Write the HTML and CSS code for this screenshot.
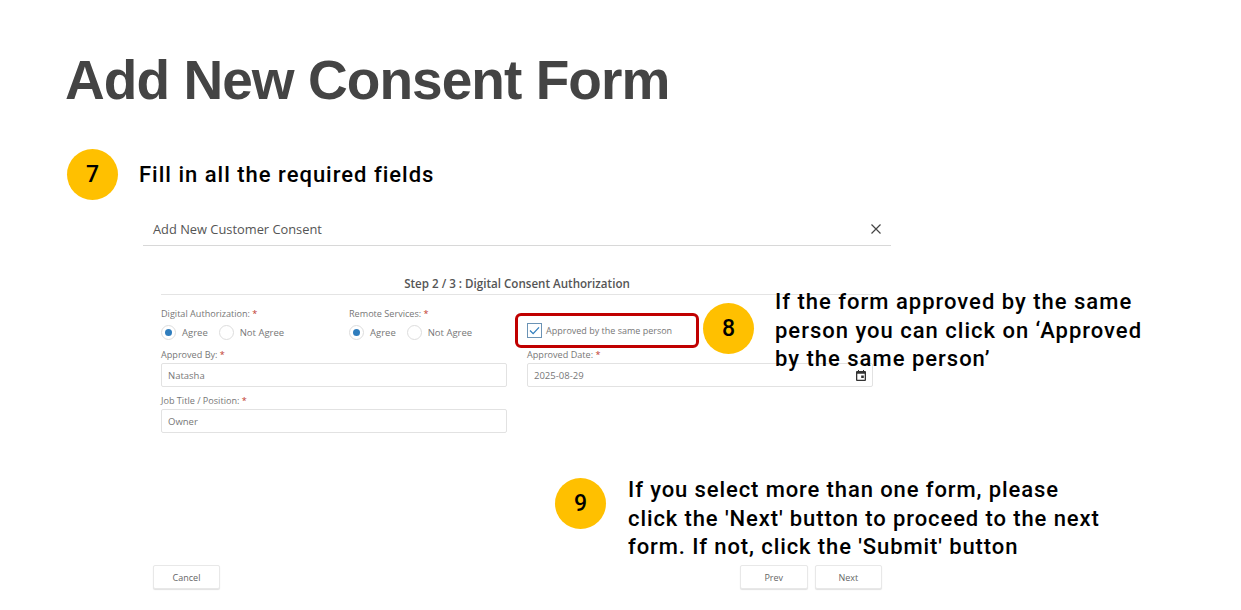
FILE: index.html
```html
<!DOCTYPE html>
<html>
<head>
    <title>Add New Consent Form</title>
    <link rel="stylesheet" href="styles.css">
</head>
<body>
    <div id="slide">
        <h1>Add New Consent Form</h1>

        <div class="step-row">
            <span class="badge">7</span>
            <span class="note">Fill in all the required fields</span>
        </div>

        <div id="panel">
            <div class="panel-header">
                <span>Add New Customer Consent</span>
                <svg class="close-icon" width="10" height="10" viewBox="0 0 10 10">
                    <path d="M0.5 0.5L9.5 9.5M9.5 0.5L0.5 9.5" stroke="#444" stroke-width="1.2" fill="none"/>
                </svg>
            </div>

            <div class="form-body">
                <div class="step-title">Step 2 / 3 : Digital Consent Authorization</div>

                <div class="form-grid">
                    <div class="radio-groups">
                        <div class="radio-group">
                            <label class="field-label">Digital Authorization: <em>*</em></label>
                            <div class="radio-row">
                                <span class="radio checked"></span><span class="radio-text">Agree</span>
                                <span class="radio"></span><span class="radio-text">Not Agree</span>
                            </div>
                        </div>
                        <div class="radio-group">
                            <label class="field-label">Remote Services: <em>*</em></label>
                            <div class="radio-row">
                                <span class="radio checked"></span><span class="radio-text">Agree</span>
                                <span class="radio"></span><span class="radio-text">Not Agree</span>
                            </div>
                        </div>
                    </div>
                    <div class="same-person">
                        <span class="checkbox">
                            <svg width="11" height="9" viewBox="0 0 12 10">
                                <path d="M1 5L4.5 8.5L11 1.5" stroke="#2f7dbd" stroke-width="1.4" fill="none"/>
                            </svg>
                        </span>
                        <span>Approved by the same person</span>
                    </div>

                    <div class="field">
                        <label class="field-label">Approved By: <em>*</em></label>
                        <div class="input">Natasha</div>
                    </div>
                    <div class="field">
                        <label class="field-label">Approved Date: <em>*</em></label>
                        <div class="input date-input">
                            <span>2025-08-29</span>
                            <svg width="10" height="11" viewBox="0 0 10 11">
                                <path d="M1 1H9A1 1 0 0 1 10 2V10A1 1 0 0 1 9 11H1A1 1 0 0 1 0 10V2A1 1 0 0 1 1 1ZM1.3 3.8V9.7H8.7V3.8ZM5.2 5.4H7.8V8H5.2Z" fill="#333" fill-rule="evenodd"/>
                                <path d="M2.5 0V1.5M7.5 0V1.5" stroke="#333" stroke-width="1"/>
                            </svg>
                        </div>
                    </div>

                    <div class="field">
                        <label class="field-label">Job Title / Position: <em>*</em></label>
                        <div class="input">Owner</div>
                    </div>
                </div>
            </div>

            <div class="panel-footer">
                <button class="btn">Cancel</button>
                <div class="footer-right">
                    <button class="btn">Prev</button>
                    <button class="btn">Next</button>
                </div>
            </div>
        </div>

        <!-- callouts that sit over the form -->
        <div class="highlight"></div>
        <span class="badge badge-8">8</span>
        <p class="note note-8">If the form approved by the same<br>person you can click on ‘Approved<br>by the same person’</p>
        <span class="badge badge-9">9</span>
        <p class="note note-9">If you select more than one form, please<br>click the 'Next' button to proceed to the next<br>form. If not, click the 'Submit' button</p>
    </div>
</body>
</html>
```

FILE: styles.css
```css
body {
    margin: 0;
    background-color: #fff;
    font-family: "Open Sans", "Noto Sans", sans-serif;
}

#slide {
    position: relative;
    width: 1241px;
    height: 610px;
    overflow: hidden;
}

h1 {
    margin: 0;
    padding: 49px 0 0 65px;
    font-family: "Liberation Sans", Arial, sans-serif;
    font-size: 55px;
    line-height: 63px;
    font-weight: bold;
    letter-spacing: -0.95px;
    color: #444;
}

.step-row {
    display: flex;
    align-items: center;
    gap: 21px;
    margin: 37px 0 0 67px;
}

.step-row .note {
    padding-top: 1px;
}

.badge {
    display: flex;
    align-items: center;
    justify-content: center;
    width: 51px;
    height: 51px;
    border-radius: 50%;
    background-color: #ffc000;
    color: #000;
    font-family: Roboto, sans-serif;
    font-size: 23px;
    font-weight: 500;
}

.note {
    margin: 0;
    font-family: Roboto, sans-serif;
    font-size: 22px;
    font-weight: 500;
    line-height: 28.5px;
    letter-spacing: 1px;
    color: #000;
}

#panel {
    width: 748px;
    margin: 12px 0 0 143px;
}

.panel-header {
    display: flex;
    align-items: center;
    justify-content: space-between;
    height: 33px;
    padding: 0 10px;
    border-bottom: 1px solid #d8d8d8;
    font-size: 12.85px;
    color: #555;
}

.form-body {
    padding: 0 18px;
}

.step-title {
    margin-top: 30px;
    padding-bottom: 2px;
    height: 16px;
    border-bottom: 1px solid #e4e4e4;
    text-align: center;
    font-size: 11.6px;
    font-weight: 600;
    line-height: 16px;
    color: #555;
}

.form-grid {
    display: grid;
    grid-template-columns: 346px 346px;
    column-gap: 20px;
    row-gap: 6px;
    margin-top: 12px;
}

.radio-groups {
    display: grid;
    grid-template-columns: 188px 158px;
    padding-bottom: 1px;
}

.field-label {
    display: block;
    font-size: 9.1px;
    line-height: 14px;
    color: #777;
}

.field-label em {
    font-style: normal;
    color: #c0392b;
}

.radio-row {
    display: flex;
    align-items: center;
    margin-top: 4px;
    height: 15px;
}

.radio {
    width: 13px;
    height: 13px;
    border: 1px solid #ddd;
    border-radius: 50%;
    position: relative;
}

.radio.checked::after {
    content: "";
    position: absolute;
    left: 3px;
    top: 3px;
    width: 7px;
    height: 7px;
    border-radius: 50%;
    background-color: #2f7dbd;
}

.radio-text {
    margin-left: 6px;
    margin-right: 11px;
    font-size: 9.5px;
    color: #777;
}

.same-person {
    display: flex;
    align-items: center;
    align-self: start;
    gap: 4px;
    padding-top: 16px;
    font-size: 9px;
    color: #777;
}

.checkbox {
    display: flex;
    align-items: center;
    justify-content: center;
    width: 13px;
    height: 13px;
    border: 1px solid #6b93b5;
}

.field {
    margin-top: 1px;
}

.input {
    box-sizing: border-box;
    height: 24px;
    margin-top: 1px;
    padding: 0 6px;
    border: 1px solid #e2e2e2;
    border-radius: 2px;
    font-size: 9.5px;
    line-height: 23px;
    color: #777;
}

.date-input {
    display: flex;
    align-items: center;
    justify-content: space-between;
}

.panel-footer {
    display: flex;
    justify-content: space-between;
    margin-top: 132px;
    padding: 0 9px 0 10px;
}

.footer-right {
    display: flex;
    gap: 7px;
    width: 142px;
}

.footer-right .btn {
    flex: 1;
}

.btn {
    width: 67px;
    height: 24px;
    padding: 0;
    background-color: #fff;
    border: 1px solid #e8e8e8;
    border-radius: 2px;
    box-shadow: 0 1px 1px rgba(0, 0, 0, 0.12);
    font-family: "Open Sans", sans-serif;
    font-size: 9px;
    color: #666;
}

.highlight {
    position: absolute;
    left: 515px;
    top: 313px;
    width: 178px;
    height: 29px;
    border: 3px solid #c00000;
    border-radius: 6px;
}

.badge-8 {
    position: absolute;
    left: 703px;
    top: 303px;
}

.note-8 {
    position: absolute;
    left: 775px;
    top: 288px;
}

.badge-9 {
    position: absolute;
    left: 555px;
    top: 478px;
}

.note-9 {
    position: absolute;
    left: 628px;
    top: 476px;
    letter-spacing: 0.9px;
}
```
